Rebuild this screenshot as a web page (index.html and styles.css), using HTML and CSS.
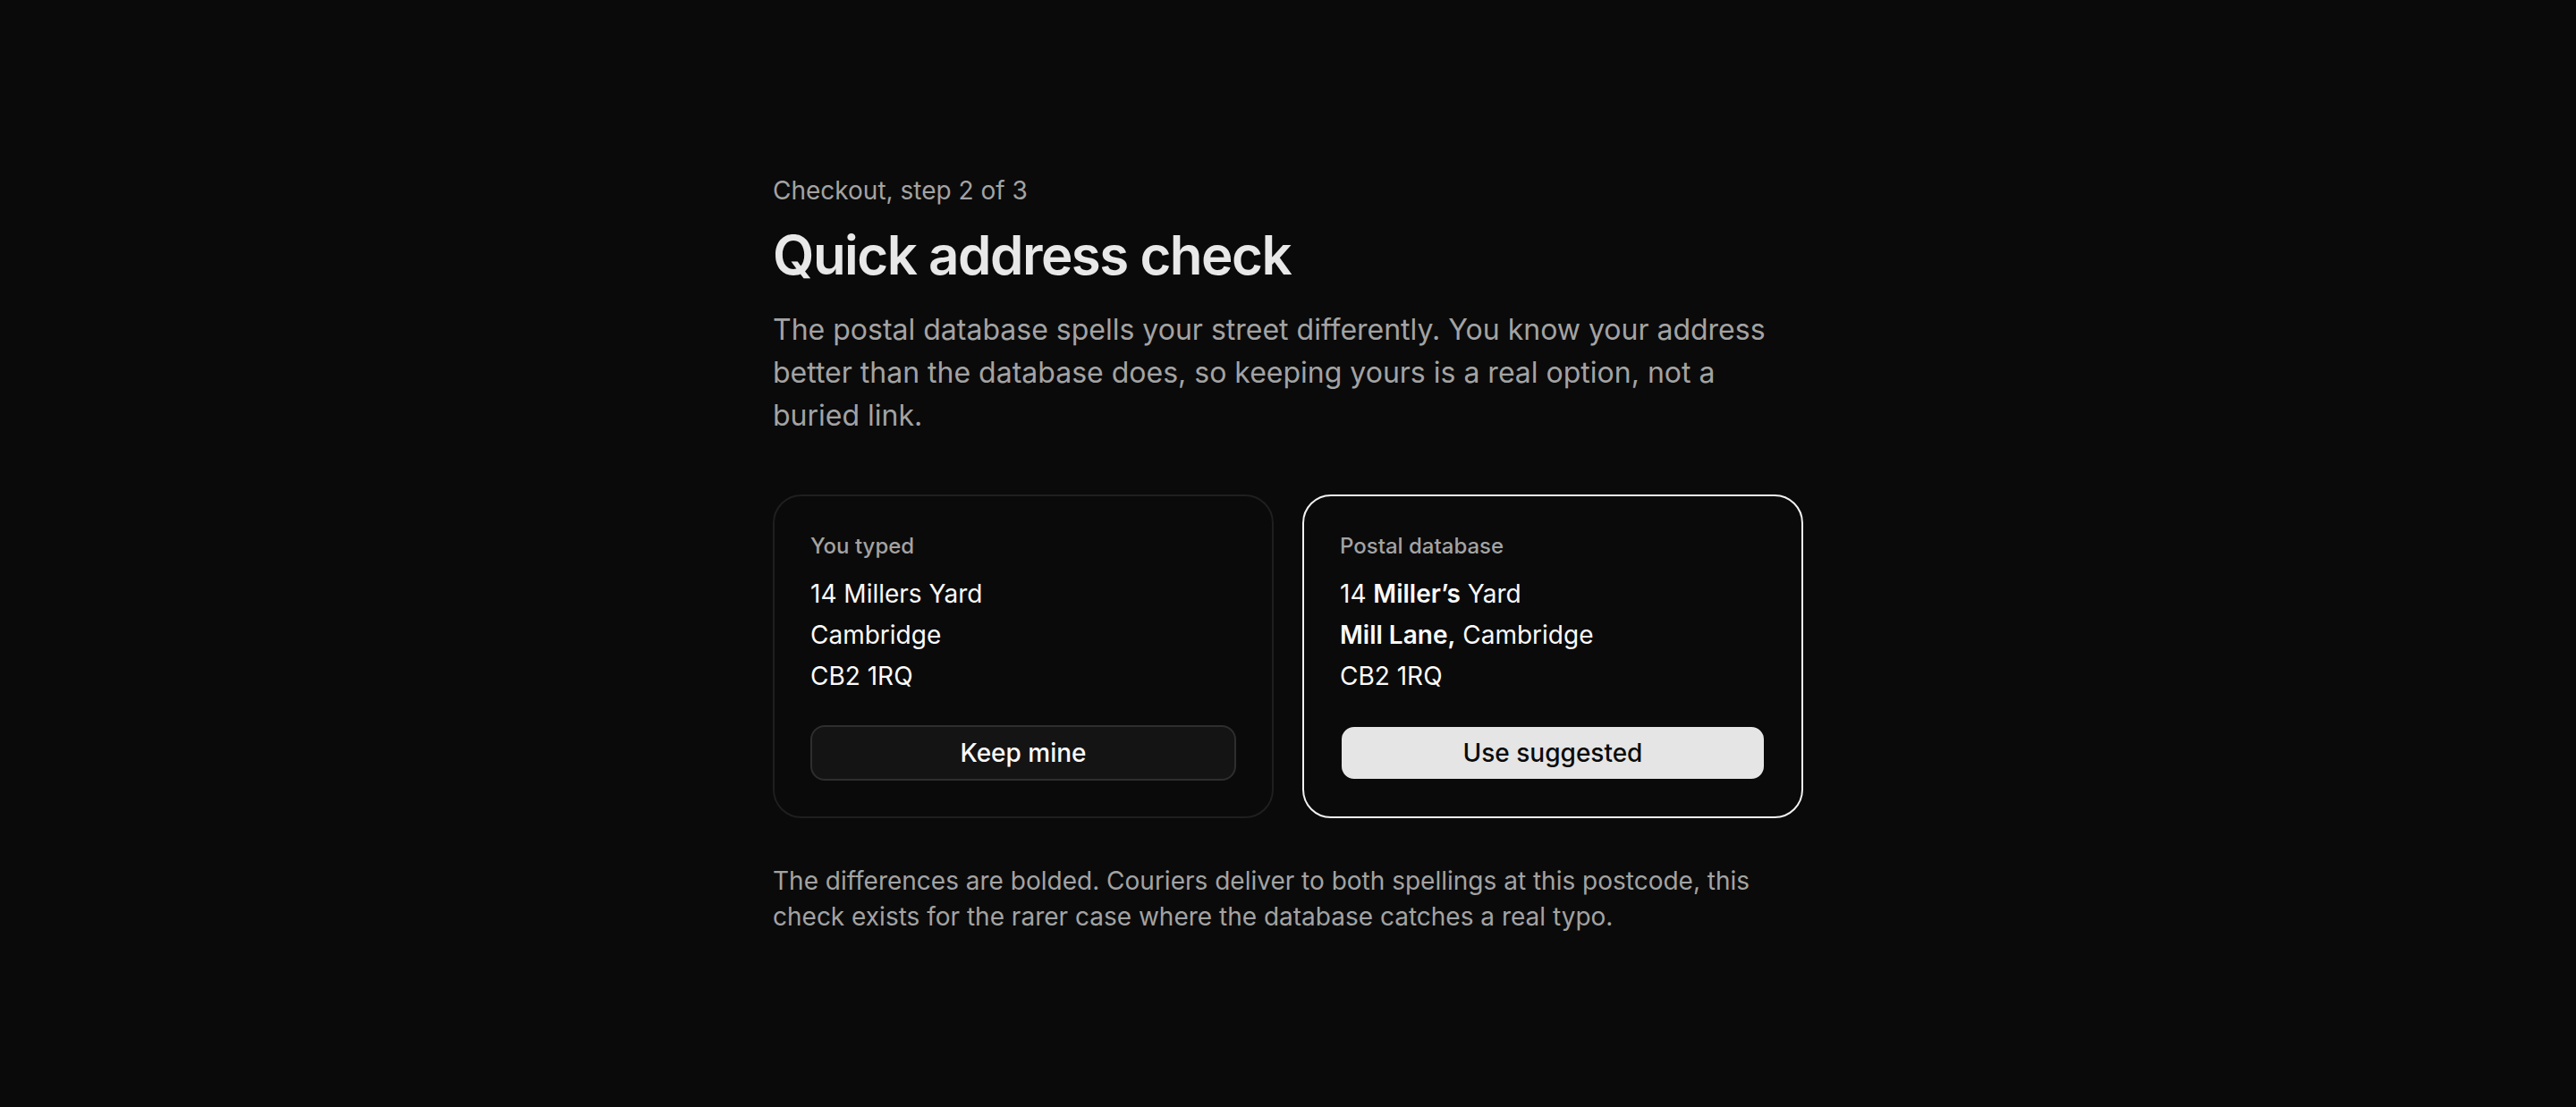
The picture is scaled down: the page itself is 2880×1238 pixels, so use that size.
FILE: index.html
```html
<!DOCTYPE html>
<html lang="en">
<head>
<meta charset="utf-8">
<title>Quick address check</title>
<link rel="stylesheet" href="styles.css">
</head>
<body>
<main class="page">
  <section class="check">
    <p class="step">Checkout, step 2 of 3</p>
    <h1 class="title">Quick address check</h1>
    <p class="lead">The postal database spells your street differently. You know your address better than the database does, so keeping yours is a real option, not a buried link.</p>
    <div class="options">
      <div class="card">
        <p class="card-label">You typed</p>
        <div class="address">
          <div>14 Millers Yard</div>
          <div>Cambridge</div>
          <div>CB2 1RQ</div>
        </div>
        <button class="btn btn-secondary" type="button">Keep mine</button>
      </div>
      <div class="card card-selected">
        <p class="card-label">Postal database</p>
        <div class="address">
          <div>14 <b>Miller’s</b> Yard</div>
          <div><b>Mill Lane,</b> Cambridge</div>
          <div>CB2 1RQ</div>
        </div>
        <button class="btn btn-primary" type="button">Use suggested</button>
      </div>
    </div>
    <p class="note">The differences are bolded. Couriers deliver to both spellings at this postcode, this check exists for the rarer case where the database catches a real typo.</p>
  </section>
</main>
</body>
</html>
```
FILE: styles.css
```css
* { box-sizing: border-box; }
html, body { margin: 0; padding: 0; }
body {
  background: #0a0a0a;
  color: #fafafa;
  font-family: Inter, "Noto Sans", "Liberation Sans", sans-serif;
}
.page {
  min-height: 100vh;
  display: flex;
  align-items: center;
  justify-content: center;
}
.check {
  width: 1152px;
  display: flex;
  flex-direction: column;
}
.step {
  margin: 0;
  font-size: 28px;
  line-height: 40px;
  color: #a3a3a3;
}
.title {
  margin: 16px 0 0;
  font-size: 60px;
  line-height: 72px;
  font-weight: 600;
  letter-spacing: -1.5px;
  color: #e8e8e8;
}
.lead {
  margin: 24px 0 0;
  font-size: 32px;
  line-height: 48px;
  color: #a3a3a3;
}
.options {
  margin-top: 64px;
  display: grid;
  grid-template-columns: 1fr 1fr;
  gap: 32px;
}
.card {
  border: 2px solid #1f1f1f;
  border-radius: 32px;
  padding: 40px;
  background: #0a0a0a;
  display: flex;
  flex-direction: column;
}
.card-selected {
  border-color: #f2f2f2;
}
.card-label {
  margin: 0;
  font-size: 24px;
  line-height: 32px;
  font-weight: 500;
  color: #a3a3a3;
}
.address {
  margin-top: 14px;
  font-size: 28px;
  line-height: 46px;
  color: #fafafa;
}
.address b { font-weight: 600; }
.btn {
  margin-top: 32px;
  width: 100%;
  border: 2px solid #2e2e2e;
  border-radius: 16px;
  padding: 8px 24px;
  font-family: inherit;
  font-size: 28px;
  line-height: 42px;
  font-weight: 500;
  cursor: pointer;
}
.btn-secondary {
  background: #141414;
  color: #fafafa;
}
.btn-primary {
  background: #e5e5e5;
  border-color: #0a0a0a;
  color: #0a0a0a;
}
.note {
  margin: 50px 0 0;
  font-size: 28px;
  line-height: 40px;
  color: #a3a3a3;
}
```
